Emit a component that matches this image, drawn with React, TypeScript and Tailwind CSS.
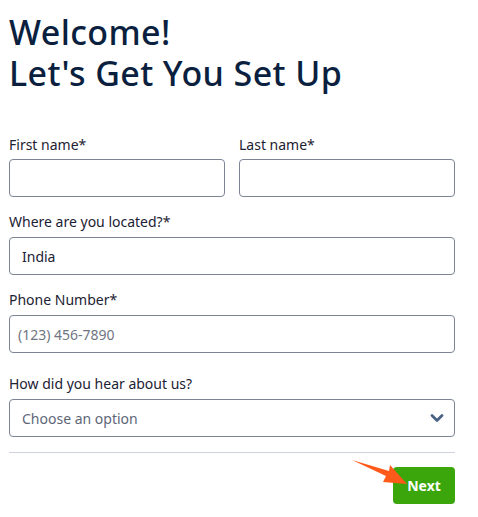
import { useState } from "react"

const font = { fontFamily: '"Noto Sans", "Open Sans", sans-serif' }

function Label({ children }: { children: React.ReactNode }) {
  return <label className="block text-[14px] leading-[20px] text-[#1c2233]">{children}</label>
}

export default function App() {
  const [location, setLocation] = useState("India")

  return (
    <div className="min-h-[517px] w-[478px] bg-white" style={font}>
      <div className="w-[455px] pl-[9px] pt-[12px]">
        <h1 className="text-[34px] font-medium leading-[41px] tracking-[0.4px] text-[#0b1f3f]">
          Welcome!
          <br />
          Let's Get You Set Up
        </h1>

        <div className="mt-[41px] grid grid-cols-2 gap-[14px]">
          <div>
            <Label>First name*</Label>
            <input className="mt-[4px] h-[38px] w-full rounded-[4px] border border-[#7c8596] px-3 text-[14px] outline-none" />
          </div>
          <div>
            <Label>Last name*</Label>
            <input className="mt-[4px] h-[38px] w-full rounded-[4px] border border-[#7c8596] px-3 text-[14px] outline-none" />
          </div>
        </div>

        <div className="mt-[15px]">
          <Label>Where are you located?*</Label>
          <input
            value={location}
            onChange={(e) => setLocation(e.target.value)}
            className="mt-[5px] h-[38px] w-full rounded-[4px] border border-[#7c8596] px-3 text-[14px] text-[#1c2233] outline-none"
          />
        </div>

        <div className="mt-[15px]">
          <Label>Phone Number*</Label>
          <input
            placeholder="(123) 456-7890"
            className="mt-[5px] h-[38px] w-full rounded-[4px] border border-[#7c8596] px-2 text-[14px] text-[#1c2233] outline-none placeholder:text-[#6f7682]"
          />
        </div>

        <div className="mt-[21px]">
          <Label>How did you hear about us?</Label>
          <div className="mt-[5px] flex h-[38px] w-full items-center justify-between rounded-[4px] border border-[#7c8596] pl-3 pr-[10px]">
            <span className="text-[14px] text-[#5d6677]">Choose an option</span>
            <svg width="14" height="10" viewBox="0 0 14 10" fill="none">
              <path d="M2 2.5 L7 7.5 L12 2.5" stroke="#4a6283" strokeWidth="2.8" strokeLinecap="round" strokeLinejoin="round" />
            </svg>
          </div>
        </div>

        <div className="mt-[15px] h-px w-full bg-[#cfd3da]" />

        <div className="relative mt-[14px] flex justify-end">
          <button className="h-[37px] w-[62px] rounded-[4px] bg-[#3aa60b] text-[14px] font-bold text-white">
            Next
          </button>
          <svg
            className="pointer-events-none absolute left-[334px] top-[-8px]"
            width="70"
            height="40"
            viewBox="343 459 70 40"
          >
            <polygon points="352,460 389,471 390,465 407,484 383,482 386,476" fill="#ff5a1a" />
          </svg>
        </div>
      </div>
    </div>
  )
}
